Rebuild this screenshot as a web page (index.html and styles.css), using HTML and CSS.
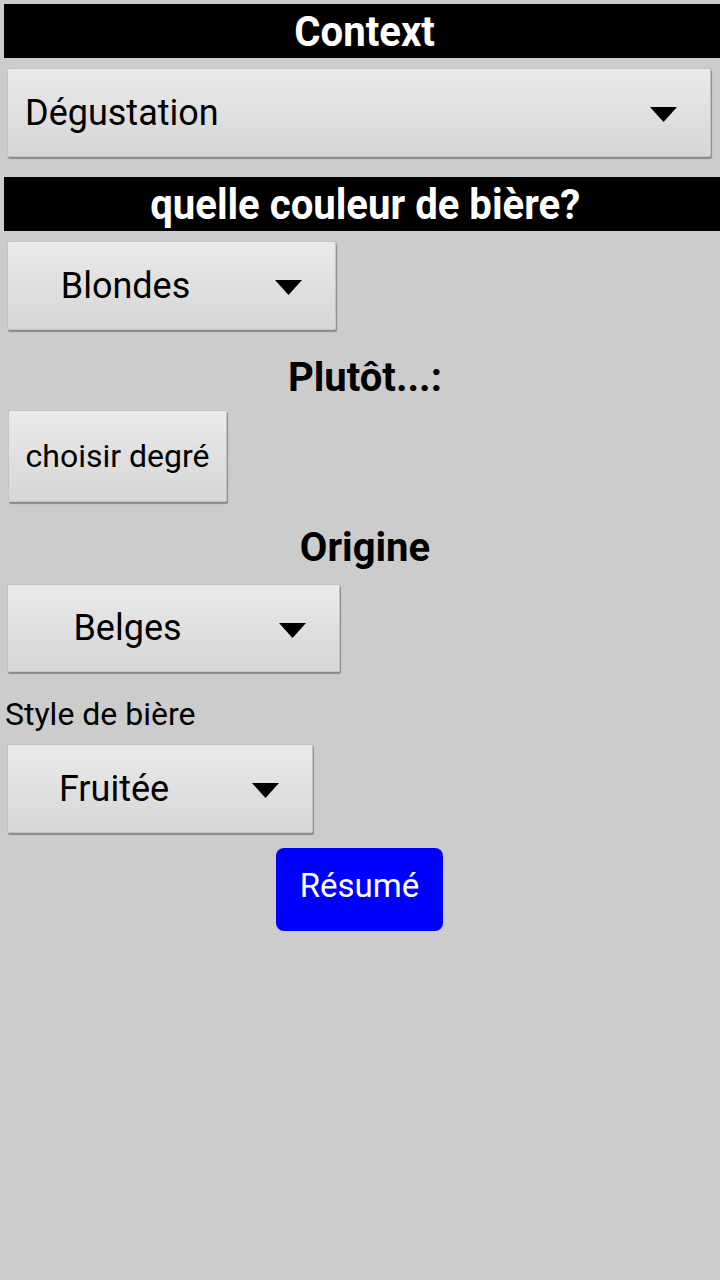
FILE: index.html
```html
<!DOCTYPE html>
<html lang="fr">
<head>
<meta charset="utf-8">
<title>Bière</title>
<link rel="stylesheet" href="styles.css">
</head>
<body>
<div class="page">
  <div class="bar bar-first"><span class="bar-text">Context</span></div>
  <div class="spinner spinner-wide">
    <span class="label label-left">Dégustation</span>
    <svg class="arrow" width="27" height="15" viewBox="0 0 27 15"><polygon points="0,0 27,0 13.5,15" fill="#000"/></svg>
  </div>

  <div class="bar bar-second"><span class="bar-text">quelle couleur de bière?</span></div>
  <div class="spinner spinner-blondes">
    <span class="label">Blondes</span>
    <svg class="arrow" width="27" height="15" viewBox="0 0 27 15"><polygon points="0,0 27,0 13.5,15" fill="#000"/></svg>
  </div>

  <h2 class="heading heading-plutot">Plutôt...:</h2>
  <div class="button">choisir degré</div>

  <h2 class="heading heading-origine">Origine</h2>
  <div class="spinner spinner-belges">
    <span class="label">Belges</span>
    <svg class="arrow" width="27" height="15" viewBox="0 0 27 15"><polygon points="0,0 27,0 13.5,15" fill="#000"/></svg>
  </div>

  <p class="caption">Style de bière</p>
  <div class="spinner spinner-fruitee">
    <span class="label">Fruitée</span>
    <svg class="arrow" width="27" height="15" viewBox="0 0 27 15"><polygon points="0,0 27,0 13.5,15" fill="#000"/></svg>
  </div>

  <div class="action-row">
    <div class="primary">Résumé</div>
  </div>
</div>
</body>
</html>
```

FILE: styles.css
```css
html, body {
  margin: 0;
  padding: 0;
}

body {
  background: #cccccc;
  font-family: Roboto, "Noto Sans", sans-serif;
  color: #000;
  width: 720px;
  height: 1280px;
  overflow: hidden;
}

.page {
  padding: 4px 0 0 4px;
  display: flex;
  flex-direction: column;
  align-items: flex-start;
}

.bar {
  align-self: stretch;
  height: 54px;
  background: #000;
  color: #fff;
  display: flex;
  align-items: center;
  justify-content: center;
  padding-left: 6px;
}

.bar-second {
  margin-top: 20px;
}

.bar-text {
  display: inline-block;
  font-weight: 700;
  font-size: 42px;
  line-height: 1;
  transform: scaleX(0.955);
  white-space: nowrap;
  margin-top: 2px;
}

.spinner {
  box-sizing: border-box;
  margin-left: 3px;
  margin-top: 10px;
  height: 89px;
  display: flex;
  align-items: center;
  background: linear-gradient(#eaeaea, #d6d6d6);
  border: 1px solid #c4c4c4;
  border-radius: 2px;
  box-shadow: 1px 2px 1px #8a8a8a;
  font-size: 36px;
}

.spinner-wide { width: 704px; }
.spinner-blondes { width: 329px; }
.spinner-belges { width: 333px; height: 88px; margin-top: 14px; }
.spinner-fruitee { width: 306px; margin-top: 14px; }

.label {
  flex: 1;
  text-align: center;
  white-space: nowrap;
}

.label-left {
  text-align: left;
  padding-left: 17px;
}

.arrow {
  flex: none;
  margin: 4px 33px 0 32px;
}

.heading {
  align-self: stretch;
  margin: 0;
  height: 44px;
  line-height: 44px;
  text-align: center;
  font-size: 40px;
  font-weight: 700;
  padding-left: 6px;
}

.heading-plutot { margin-top: 26px; }
.heading-origine { margin-top: 24px; }

.button {
  box-sizing: border-box;
  margin: 10px 0 0 4px;
  width: 219px;
  height: 92px;
  display: flex;
  align-items: center;
  justify-content: center;
  background: linear-gradient(#eaeaea, #d6d6d6);
  border: 1px solid #c4c4c4;
  border-radius: 2px;
  box-shadow: 1px 2px 1px #8a8a8a;
  font-size: 32px;
  white-space: nowrap;
}

.caption {
  margin: 26px 0 0 1px;
  font-size: 32px;
  line-height: 32px;
}

.action-row {
  align-self: stretch;
  display: flex;
  justify-content: center;
  padding-right: 5px;
  margin-top: 15px;
}

.primary {
  width: 167px;
  height: 83px;
  background: #0000ff;
  color: #fff;
  border-radius: 8px;
  display: flex;
  align-items: center;
  justify-content: center;
  font-size: 33px;
  padding-bottom: 8px;
  box-sizing: border-box;
}
```
